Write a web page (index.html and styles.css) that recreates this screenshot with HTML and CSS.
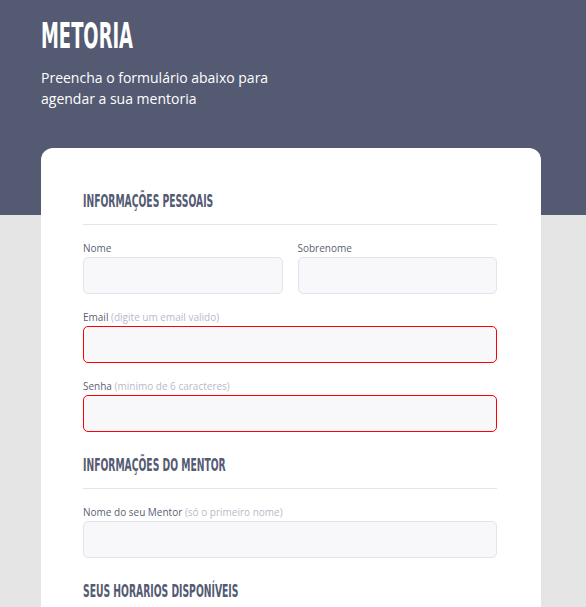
FILE: index.html
```html
<!DOCTYPE html>
<html lang="pt-BR">
<head>
<meta charset="utf-8">
<title>Metoria</title>
<link rel="stylesheet" href="styles.css">
</head>
<body>
<div class="page">
  <header class="hero">
    <h1 class="title"><span class="cond">METORIA</span></h1>
    <p class="subtitle">Preencha o formulário abaixo para<br>agendar a sua mentoria</p>
  </header>
  <form class="card">
    <h2 class="section-title"><span class="cond">INFORMAÇÕES PESSOAIS</span></h2>
    <hr class="divider">
    <div class="row">
      <label class="field">
        <span class="label">Nome</span>
        <input class="input" type="text">
      </label>
      <label class="field">
        <span class="label">Sobrenome</span>
        <input class="input" type="text">
      </label>
    </div>
    <label class="field">
      <span class="label">Email <span class="hint">(digite um email valido)</span></span>
      <input class="input error" type="email">
    </label>
    <label class="field">
      <span class="label">Senha <span class="hint">(minimo de 6 caracteres)</span></span>
      <input class="input error" type="password">
    </label>
    <h2 class="section-title"><span class="cond">INFORMAÇÕES DO MENTOR</span></h2>
    <hr class="divider">
    <label class="field">
      <span class="label">Nome do seu Mentor <span class="hint">(só o primeiro nome)</span></span>
      <input class="input" type="text">
    </label>
    <h2 class="section-title"><span class="cond">SEUS HORARIOS DISPONÍVEIS</span></h2>
  </form>
</div>
</body>
</html>
```
FILE: styles.css
```css
* { box-sizing: border-box; }
html, body { margin: 0; padding: 0; }
body {
  background: linear-gradient(to bottom, #535a72 0, #535a72 215px, #e5e5e5 215px);
  font-family: "Open Sans", "Noto Sans", sans-serif;
  height: 607px;
  overflow: hidden;
}
.page {
  padding-left: 41px;
  width: 541px;
}
.hero {
  padding-top: 15px;
  height: 148px;
}
.cond {
  display: inline-block;
  font-family: "Liberation Sans Narrow", "DejaVu Sans Condensed", sans-serif;
  font-weight: 700;
  transform: scaleX(0.57);
  transform-origin: left center;
  white-space: nowrap;
}
.title {
  margin: 0;
  font-size: 35px;
  line-height: 40px;
  color: #ffffff;
}
.subtitle {
  margin: 11px 0 0;
  color: #ffffff;
  font-size: 14px;
  line-height: 21px;
}
.card {
  background: #ffffff;
  border-radius: 12px;
  width: 500px;
  padding: 40px 44px 40px 42px;
  display: flex;
  flex-direction: column;
  min-height: 470px;
}
.section-title {
  margin: 4px 0 0;
  font-size: 18px;
  line-height: 24px;
  color: #535a72;
}
.section-title:first-child { margin-top: 0; }
.divider {
  border: 0;
  border-top: 1px solid #e4e4ee;
  margin: 11px 0 16px;
  width: 100%;
}
.row {
  display: grid;
  grid-template-columns: 1fr 1fr;
  gap: 15px;
}
.field {
  display: flex;
  flex-direction: column;
  margin-bottom: 16px;
}
.label {
  font-size: 10px;
  line-height: 14px;
  color: #5a5f73;
  margin-bottom: 2px;
}
.hint { color: #b9b9c9; }
.input {
  height: 37px;
  width: 100%;
  border: 1px solid #e2e2ea;
  border-radius: 5px;
  background: #f8f8fb;
  font: inherit;
}
.input.error { border-color: #ff0000; }
```
